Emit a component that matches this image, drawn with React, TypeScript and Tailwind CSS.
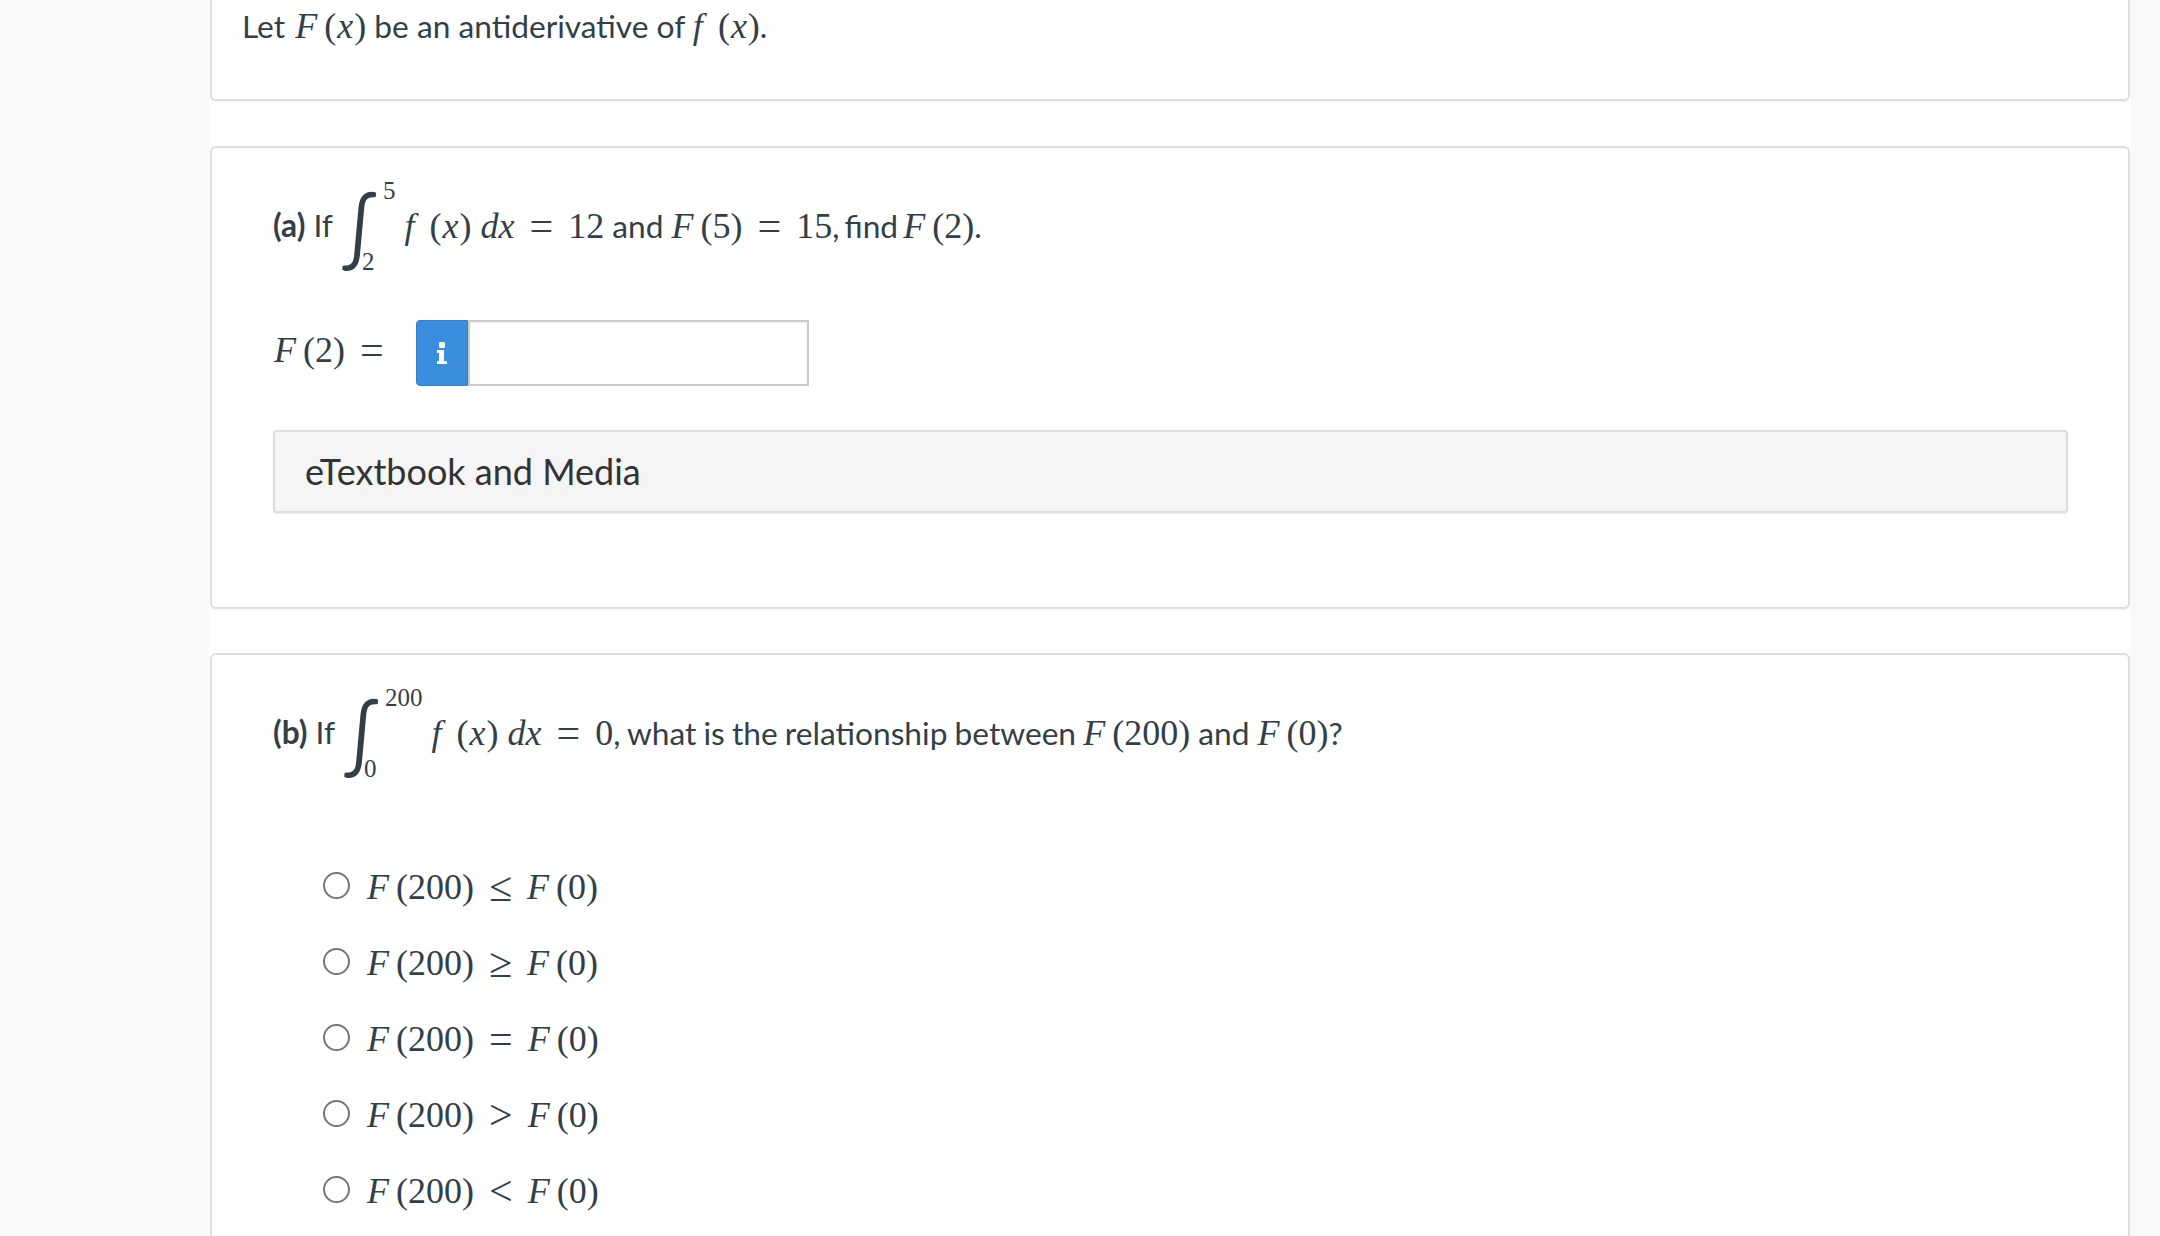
const lato = 'font-["Lato","Noto_Sans",sans-serif]';

function M({ children }: { children: React.ReactNode }) {
  return <span className='font-["Liberation_Serif",serif] text-[36px]'>{children}</span>;
}

function I({ children }: { children: React.ReactNode }) {
  return <i className="italic">{children}</i>;
}

// F (x) style call, the italic name sits a bit apart from the bracket
function Fn({ name, arg, argItalic }: { name: string; arg: string; argItalic?: boolean }) {
  return (
    <M>
      <I>{name}</I>
      <span className={name === 'f' ? 'ml-[15px]' : 'ml-[7px]'}>(</span>
      {argItalic ? <i className="mx-[1px] italic">{arg}</i> : arg})
    </M>
  );
}

// relation signs are drawn wider than the serif body size
function Rel({ children }: { children: React.ReactNode }) {
  return <span className="mx-[15px] inline-block translate-y-[2px] text-[42px] leading-[0]">{children}</span>;
}

function Integral({ top, bottom }: { top: string; bottom: string }) {
  return (
    <span className="inline-flex h-[86px] items-center">
      <span className='ml-[1px] inline-block origin-left scale-x-[0.85] font-["Lato",sans-serif] text-[80px] leading-[86px]'>∫</span>
      <span className='flex h-[86px] flex-col justify-between font-["Liberation_Serif",serif] text-[25px] leading-[24px]'>
        <span className="-mt-[4px] ml-[1px]">{top}</span>
        <span className="-mb-[5px] -ml-[20px]">{bottom}</span>
      </span>
    </span>
  );
}

function Card({ children, className }: { children: React.ReactNode; className: string }) {
  return (
    <div className={`rounded-[6px] border-2 border-[#dedede] bg-white shadow-[0_1px_2px_rgba(0,0,0,0.05)] ${className}`}>
      {children}
    </div>
  );
}

function Choice({ op }: { op: string }) {
  return (
    <div className="flex h-[76px] items-center pl-[111px]">
      <span className="h-[27px] w-[27px] shrink-0 rounded-full border-2 border-[#767676] bg-white" />
      <span className="ml-[17px] translate-y-[2px] leading-[40px]">
        <Fn name="F" arg="200" />
        <M><Rel>{op}</Rel></M>
        <Fn name="F" arg="0" />
      </span>
    </div>
  );
}

export default function App() {
  return (
    <div className={`h-[1236px] overflow-hidden bg-[#f9f9f9] pr-[29px] pl-[209px] ${lato} text-[31.7px] text-[#333f48]`}>
      <div className="h-full bg-white px-[1px]">
        <Card className="h-[101px] rounded-t-none border-t-0 pt-[5px] pl-[30px]">
          <div className="leading-[42px]">
            Let <span className="ml-[2px]"><Fn name="F" arg="x" argItalic /></span> be an antiderivative of <Fn name="f" arg="x" argItalic />.
          </div>
        </Card>

        <Card className="mt-[45px] h-[463px] pt-[30px] pr-[60px] pl-[61px]">
          <div className="flex h-[96px] items-center whitespace-pre">
            <span><b className="font-bold">(a)</b> If </span>
            <Integral top="5" bottom="2" />
            <span className="ml-[9px]">
              <Fn name="f" arg="x" argItalic />
              <M>
                {' '}<I>dx</I>
                <Rel>=</Rel>12
              </M>
              {' and '}
              <Fn name="F" arg="5" />
              <M><Rel>=</Rel>15</M>
              <span className="[word-spacing:-3px]">{', find '}</span>
              <Fn name="F" arg="2" />.
            </span>
          </div>

          <div className="mt-[46px] flex h-[66px] items-center">
            <span className="ml-[1px] w-[142px] -translate-y-[3px]">
              <Fn name="F" arg="2" />
              <M><Rel>=</Rel></M>
            </span>
            <span className="flex h-full w-[52px] items-center justify-center rounded-l-[4px] border border-[#2f7fcc] bg-[#3b8ddd]">
              <svg width="10" height="22" viewBox="0 0 10 22" fill="#fff">
                <path d="M3 0h4l1 1v4l-1 1H3L2 5V1zM0 8h7v11h3v3H0v-3h2v-8H0z" />
              </svg>
            </span>
            <span className="h-full w-[341px] border-2 border-[#cccccc] bg-white shadow-[inset_0_1px_2px_rgba(0,0,0,0.08)]" />
          </div>

          <div className="mt-[44px] flex h-[83px] items-center rounded-[4px] border-2 border-[#dddddd] bg-[#f5f5f5] pb-[1px] pl-[30px] text-[36px] text-[#333333] shadow-[0_1px_2px_rgba(0,0,0,0.08)]">
            eTextbook and Media
          </div>
        </Card>

        <Card className="mt-[44px] h-[700px] pt-[30px]">
          <div className="flex h-[96px] items-center whitespace-pre pl-[61px]">
            <span><b className="font-bold">(b)</b> If </span>
            <Integral top="200" bottom="0" />
            <span className="ml-[9px]">
              <Fn name="f" arg="x" argItalic />
              <M>
                {' '}<I>dx</I>
                <Rel>=</Rel>0
              </M>
              <span className="[word-spacing:-1px]">{', what is the relationship between '}</span>
              <Fn name="F" arg="200" />
              {' and '}
              <Fn name="F" arg="0" />?
            </span>
          </div>

          <div className="mt-[66px]">
            <Choice op="≤" />
            <Choice op="≥" />
            <Choice op="=" />
            <Choice op=">" />
            <Choice op="<" />
          </div>
        </Card>
      </div>
    </div>
  );
}
